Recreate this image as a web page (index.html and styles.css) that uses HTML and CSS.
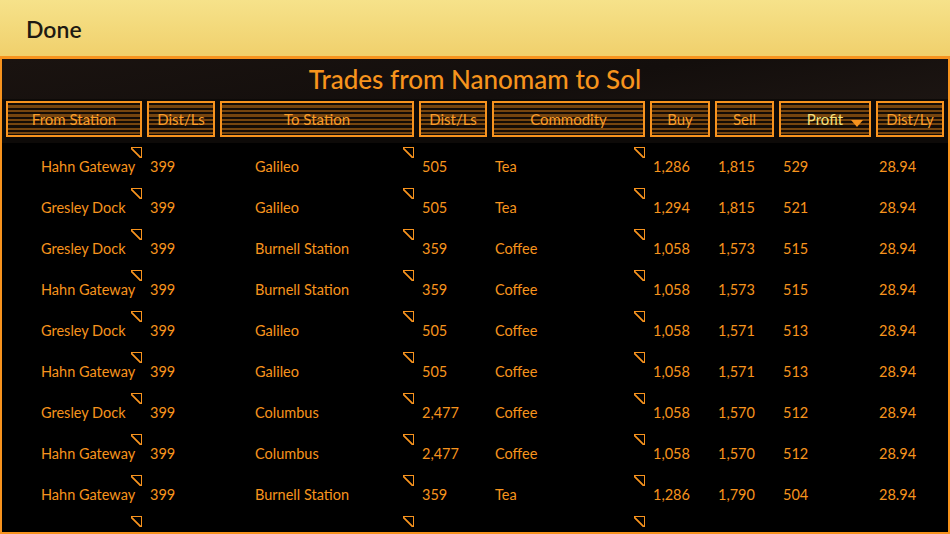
FILE: index.html
```html
<!DOCTYPE html>
<html>
<head>
    <title>Trades</title>
    <link rel="stylesheet" href="styles.css">
</head>
<body>

<div class="topbar">
    <span class="done">Done</span>
</div>

<div class="panel">
    <h3 class="title">Trades from Nanomam to Sol</h3>

    <div class="grid head">
        <div class="hcell">From Station</div>
        <div class="hcell">Dist/Ls</div>
        <div class="hcell">To Station</div>
        <div class="hcell">Dist/Ls</div>
        <div class="hcell">Commodity</div>
        <div class="hcell">Buy</div>
        <div class="hcell">Sell</div>
        <div class="hcell sorted">Profit <span class="arrow"></span></div>
        <div class="hcell">Dist/Ly</div>
    </div>

    <div class="rows">
        <div class="grid row">
            <div class="cell station mark">Hahn Gateway</div><div class="cell">399</div>
            <div class="cell station mark">Galileo</div><div class="cell">505</div>
            <div class="cell mark">Tea</div>
            <div class="cell">1,286</div><div class="cell">1,815</div><div class="cell profit">529</div><div class="cell">28.94</div>
        </div>
        <div class="grid row">
            <div class="cell station mark">Gresley Dock</div><div class="cell">399</div>
            <div class="cell station mark">Galileo</div><div class="cell">505</div>
            <div class="cell mark">Tea</div>
            <div class="cell">1,294</div><div class="cell">1,815</div><div class="cell profit">521</div><div class="cell">28.94</div>
        </div>
        <div class="grid row">
            <div class="cell station mark">Gresley Dock</div><div class="cell">399</div>
            <div class="cell station mark">Burnell Station</div><div class="cell">359</div>
            <div class="cell mark">Coffee</div>
            <div class="cell">1,058</div><div class="cell">1,573</div><div class="cell profit">515</div><div class="cell">28.94</div>
        </div>
        <div class="grid row">
            <div class="cell station mark">Hahn Gateway</div><div class="cell">399</div>
            <div class="cell station mark">Burnell Station</div><div class="cell">359</div>
            <div class="cell mark">Coffee</div>
            <div class="cell">1,058</div><div class="cell">1,573</div><div class="cell profit">515</div><div class="cell">28.94</div>
        </div>
        <div class="grid row">
            <div class="cell station mark">Gresley Dock</div><div class="cell">399</div>
            <div class="cell station mark">Galileo</div><div class="cell">505</div>
            <div class="cell mark">Coffee</div>
            <div class="cell">1,058</div><div class="cell">1,571</div><div class="cell profit">513</div><div class="cell">28.94</div>
        </div>
        <div class="grid row">
            <div class="cell station mark">Hahn Gateway</div><div class="cell">399</div>
            <div class="cell station mark">Galileo</div><div class="cell">505</div>
            <div class="cell mark">Coffee</div>
            <div class="cell">1,058</div><div class="cell">1,571</div><div class="cell profit">513</div><div class="cell">28.94</div>
        </div>
        <div class="grid row">
            <div class="cell station mark">Gresley Dock</div><div class="cell">399</div>
            <div class="cell station mark">Columbus</div><div class="cell">2,477</div>
            <div class="cell mark">Coffee</div>
            <div class="cell">1,058</div><div class="cell">1,570</div><div class="cell profit">512</div><div class="cell">28.94</div>
        </div>
        <div class="grid row">
            <div class="cell station mark">Hahn Gateway</div><div class="cell">399</div>
            <div class="cell station mark">Columbus</div><div class="cell">2,477</div>
            <div class="cell mark">Coffee</div>
            <div class="cell">1,058</div><div class="cell">1,570</div><div class="cell profit">512</div><div class="cell">28.94</div>
        </div>
        <div class="grid row">
            <div class="cell station mark">Hahn Gateway</div><div class="cell">399</div>
            <div class="cell station mark">Burnell Station</div><div class="cell">359</div>
            <div class="cell mark">Tea</div>
            <div class="cell">1,286</div><div class="cell">1,790</div><div class="cell profit">504</div><div class="cell">28.94</div>
        </div>
        <div class="grid row">
            <div class="cell station mark"></div><div class="cell"></div>
            <div class="cell station mark"></div><div class="cell"></div>
            <div class="cell mark"></div>
            <div class="cell"></div><div class="cell"></div><div class="cell"></div><div class="cell"></div>
        </div>
    </div>
</div>

</body>
</html>
```

FILE: styles.css
```css
html, body {
    margin: 0;
    padding: 0;
    width: 950px;
    height: 534px;
    overflow: hidden;
    background-color: #000;
    font-family: Lato, "Liberation Sans", sans-serif;
}

.topbar {
    height: 56px;
    display: flex;
    align-items: center;
    padding-left: 26px;
    background: linear-gradient(to bottom, #f6e28a, #f0d06c);
}

.done {
    font-size: 23px;
    font-weight: 600;
    color: #1e1a12;
    margin-top: 2px;
}

.panel {
    height: 473px;
    border: 2px solid #f7931e;
    border-top-width: 3px;
    background-color: #000;
    overflow: hidden;
}

.title {
    margin: 0;
    height: 40px;
    line-height: 40px;
    text-align: center;
    font-size: 26px;
    font-weight: 500;
    color: #f7941d;
    background: linear-gradient(170deg, #1a1310, #130e0c 60%, #1c1512);
}

.grid {
    display: grid;
    grid-template-columns: 136px 68px 194px 68px 153px 60px 59px 92px 68px;
    column-gap: 5px;
    padding: 0 4px;
}

.head {
    padding-top: 2px;
    padding-bottom: 6px;
    background-color: #0d0a08;
}

.hcell {
    height: 32px;
    border: 2px solid #f7931e;
    display: flex;
    align-items: center;
    justify-content: center;
    font-size: 15px;
    color: #f99d2a;
    background: repeating-linear-gradient(to bottom, #140c06 0, #140c06 2px, #76450f 2px, #76450f 4.5px);
}

.sorted {
    color: #f6e07c;
    position: relative;
}

.arrow {
    position: absolute;
    right: 6px;
    top: 17px;
    width: 0;
    height: 0;
    border-left: 6px solid transparent;
    border-right: 6px solid transparent;
    border-top: 7px solid #f7931e;
}

.row {
    height: 35px;
    padding-top: 6px;
    align-items: center;
}

.cell {
    position: relative;
    height: 35px;
    line-height: 35px;
    padding-left: 3px;
    font-size: 14.5px;
    color: #f7941d;
    white-space: nowrap;
}

.station {
    padding-left: 35px;
}

.cell.profit {
    padding-left: 4px;
}

.mark::after {
    content: "";
    position: absolute;
    top: -2px;
    right: 0;
    width: 10px;
    height: 10px;
    border-top: 1.5px solid #f7931e;
    border-right: 1.5px solid #f7931e;
    background: linear-gradient(to top right, transparent calc(50% - 1px), #f7931e calc(50% - 0.6px), #f7931e calc(50% + 0.6px), transparent calc(50% + 1px));
}
```
